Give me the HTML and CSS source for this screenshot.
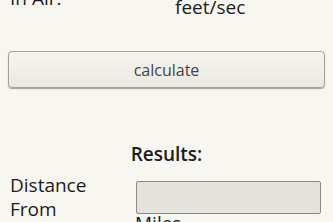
FILE: index.html
```html
<!DOCTYPE html>
<html lang="en">

<head>
    <meta charset="UTF-8">
    <meta name="viewport" content="width=device-width, initial-scale=1.0">
    <title>Distance</title>
    <link rel="stylesheet" href="styles.css">
</head>

<body>
    <div class="form">
        <div class="row top">
            <div class="label">In Air:</div>
            <div class="field">
                <span class="unit">feet/sec</span>
            </div>
        </div>
        <button class="calc">calculate</button>
        <div class="results">Results:</div>
        <div class="row">
            <div class="label">Distance<br>From</div>
            <div class="field">
                <div class="output"></div>
                <div class="unit-below">Miles</div>
            </div>
        </div>
    </div>
</body>
</html>
```

FILE: styles.css
```css
* {
    margin: 0;
    box-sizing: border-box;
    padding: 0;
}

body {
    background: #f8f6f0;
    font-family: "Open Sans", sans-serif;
    font-size: 19px;
    line-height: 24px;
    color: #1c1c1c;
    overflow: hidden;
}

.row {
    display: flex;
}

.top {
    margin-top: -14px;
}

.label {
    width: 136px;
    padding-left: 10px;
}

.field {
    width: 185px;
}

.unit {
    display: block;
    margin-top: 9px;
    padding-left: 39px;
}

.calc {
    display: block;
    width: calc(100% - 16px);
    height: 37px;
    margin: 32px 8px 0;
    border: 1px solid #a3a19c;
    border-radius: 4px;
    background: linear-gradient(#f6f4ef, #ebe8e2);
    box-shadow: 0 1px 1px rgba(0, 0, 0, 0.35);
    font-family: "Open Sans", sans-serif;
    font-size: 16px;
    color: #444;
}

.results {
    margin-top: 54px;
    text-align: center;
    font-weight: 600;
}

.results + .row {
    margin-top: 7px;
}

.output {
    height: 33px;
    margin-top: 8px;
    border: 1px solid #8a8985;
    border-radius: 2px;
    background: #e4e2dc;
}

.unit-below {
    margin-top: -3px;
    margin-left: -1px;
}
```
